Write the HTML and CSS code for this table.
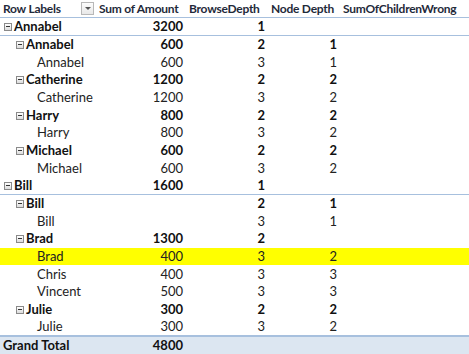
FILE: index.html
```html
<!DOCTYPE html>
<html lang="en">
<head>
    <meta charset="UTF-8">
    <title>Pivot</title>
    <link rel="stylesheet" href="styles.css">
</head>
<body>
    <table class="pivot">
        <colgroup>
            <col class="c-label"><col class="c-amount"><col class="c-browse"><col class="c-node"><col class="c-wrong">
        </colgroup>
        <thead>
            <tr>
                <th class="label-head">Row Labels<span class="filter"></span></th>
                <th>Sum of Amount</th>
                <th>BrowseDepth</th>
                <th>Node Depth</th>
                <th>SumOfChildrenWrong</th>
            </tr>
        </thead>
        <tbody>
            <tr class="lvl1"><td><span class="tog"></span>Annabel</td><td class="num">3200</td><td class="num">1</td><td></td><td></td></tr>
            <tr class="lvl2"><td><span class="tog"></span>Annabel</td><td class="num">600</td><td class="num">2</td><td class="num">1</td><td></td></tr>
            <tr class="lvl3"><td>Annabel</td><td class="num">600</td><td class="num">3</td><td class="num">1</td><td></td></tr>
            <tr class="lvl2"><td><span class="tog"></span>Catherine</td><td class="num">1200</td><td class="num">2</td><td class="num">2</td><td></td></tr>
            <tr class="lvl3"><td>Catherine</td><td class="num">1200</td><td class="num">3</td><td class="num">2</td><td></td></tr>
            <tr class="lvl2"><td><span class="tog"></span>Harry</td><td class="num">800</td><td class="num">2</td><td class="num">2</td><td></td></tr>
            <tr class="lvl3"><td>Harry</td><td class="num">800</td><td class="num">3</td><td class="num">2</td><td></td></tr>
            <tr class="lvl2"><td><span class="tog"></span>Michael</td><td class="num">600</td><td class="num">2</td><td class="num">2</td><td></td></tr>
            <tr class="lvl3"><td>Michael</td><td class="num">600</td><td class="num">3</td><td class="num">2</td><td></td></tr>
            <tr class="lvl1"><td><span class="tog"></span>Bill</td><td class="num">1600</td><td class="num">1</td><td></td><td></td></tr>
            <tr class="lvl2"><td><span class="tog"></span>Bill</td><td class="num"></td><td class="num">2</td><td class="num">1</td><td></td></tr>
            <tr class="lvl3"><td>Bill</td><td class="num"></td><td class="num">3</td><td class="num">1</td><td></td></tr>
            <tr class="lvl2"><td><span class="tog"></span>Brad</td><td class="num">1300</td><td class="num">2</td><td></td><td></td></tr>
            <tr class="lvl3 hl"><td>Brad</td><td class="num">400</td><td class="num">3</td><td class="num">2</td><td></td></tr>
            <tr class="lvl3"><td>Chris</td><td class="num">400</td><td class="num">3</td><td class="num">3</td><td></td></tr>
            <tr class="lvl3"><td>Vincent</td><td class="num">500</td><td class="num">3</td><td class="num">3</td><td></td></tr>
            <tr class="lvl2"><td><span class="tog"></span>Julie</td><td class="num">300</td><td class="num">2</td><td class="num">2</td><td></td></tr>
            <tr class="lvl3"><td>Julie</td><td class="num">300</td><td class="num">3</td><td class="num">2</td><td></td></tr>
        </tbody>
        <tfoot>
            <tr class="total"><td>Grand Total</td><td class="num">4800</td><td></td><td></td><td></td></tr>
        </tfoot>
    </table>
</body>
</html>
```

FILE: styles.css
```css
body {
    margin: 0;
    background: white;
    font-family: Lato, "Open Sans", sans-serif;
    font-size: 13px;
    color: #111;
}
.pivot {
    width: 469px;
    border-collapse: collapse;
    table-layout: fixed;
}
.c-label { width: 96px; }
.c-amount { width: 90px; }
.c-browse { width: 82px; }
.c-node { width: 72px; }
.c-wrong { width: 129px; }
.pivot th,
.pivot td {
    height: 17.67px;
    padding: 0 3px;
    box-sizing: border-box;
    white-space: nowrap;
    line-height: 17px;
}
.pivot th {
    text-align: left;
    font-weight: bold;
    font-size: 12px;
    letter-spacing: -0.25px;
    color: #1f2a3a;
    border-bottom: 1px solid #a7c0de;
}
.label-head {
    position: relative;
}
.filter {
    position: absolute;
    right: 2px;
    top: 2px;
    width: 13px;
    height: 13px;
    box-sizing: border-box;
    border: 1px solid #b8b8b8;
    background: linear-gradient(#fdfdfd, #e8e8e8);
}
.filter::after {
    content: "";
    position: absolute;
    left: 3px;
    top: 4px;
    border-left: 3px solid transparent;
    border-right: 3px solid transparent;
    border-top: 3px solid #555;
}
.num {
    text-align: right;
}
.lvl1 td,
.lvl2 td {
    font-weight: bold;
}
.lvl1 td {
    border-bottom: 1px solid #a7c0de;
}
.lvl1 td:first-child { padding-left: 4px; }
.lvl2 td:first-child { padding-left: 16px; }
.lvl3 td:first-child { padding-left: 37px; }
.lvl3 td {
    color: #222;
}
.tog {
    display: inline-block;
    position: relative;
    width: 8px;
    height: 8px;
    box-sizing: border-box;
    border: 1px solid #8a8a8a;
    background: linear-gradient(#ffffff, #dcdcdc);
    margin-right: 2px;
    vertical-align: 0;
}
.tog::after {
    content: "";
    position: absolute;
    left: 1px;
    top: 2px;
    width: 4px;
    height: 1px;
    background: #333;
}
.hl td {
    background: #ffff00;
}
.total td {
    background: #dce6f1;
    font-weight: bold;
    border-top: 2px solid #a7c0de;
}
```
